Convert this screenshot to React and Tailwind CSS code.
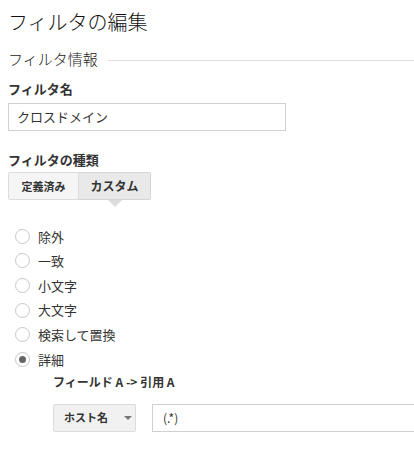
import React from 'react';

const FONT = { fontFamily: '"Noto Sans CJK JP", "Noto Sans", sans-serif' };

const Radio = ({ label, checked }) => (
  <label className="flex items-center h-[24.6px] gap-[8px]">
    <span className="w-[15px] h-[15px] rounded-full border border-[#c8c8c8] bg-white flex items-center justify-center">
      {checked && <span className="w-[7px] h-[7px] rounded-full bg-[#666]" />}
    </span>
    <span className="text-[13px] text-[#333]">{label}</span>
  </label>
);

const App = () => {
  const options = ['除外', '一致', '小文字', '大文字', '検索して置換', '詳細'];
  return (
    <div className="w-[414px] h-[461px] bg-white overflow-hidden text-[#222]" style={FONT}>
      <div className="pl-[8px]">
        <h1 className="text-[20px] leading-[24px] pt-[10px] font-light text-[#111]">フィルタの編集</h1>

        <div className="flex items-center mt-[15px]">
          <h2 className="text-[15px] leading-[20px] font-light text-[#222]">フィルタ情報</h2>
          <div className="flex-1 h-px bg-[#e0e0e0] ml-[10px] mt-[2px]" />
        </div>

        <p className="text-[13px] font-bold leading-[18px] mt-[11px] text-[#333]">フィルタ名</p>
        <div className="mt-[5px] w-[278px] h-[28px] border border-[#d0d0d0] flex items-center pl-[8px]">
          <span className="text-[13px] text-[#333]">クロスドメイン</span>
        </div>

        <p className="text-[13px] font-bold leading-[18px] mt-[20px] text-[#333]">フィルタの種類</p>
        <div className="relative mt-[3px] flex w-fit">
          <button className="h-[28px] w-[71px] border border-[#dcdcdc] bg-[#f5f5f5] text-[11px] font-bold text-[#333] rounded-l-[2px]">
            定義済み
          </button>
          <button className="h-[28px] w-[72px] border border-l-0 border-[#d4d4d4] bg-[#e9e9e9] text-[12px] font-bold text-[#333] rounded-r-[2px]">
            カスタム
          </button>
          <span className="absolute left-[100px] top-[28px] w-0 h-0 border-l-[7px] border-r-[7px] border-t-[7px] border-l-transparent border-r-transparent border-t-[#dcdcdc]" />
        </div>

        <div className="mt-[24px] pl-[7px] flex flex-col">
          {options.map((o, i) => (
            <Radio key={o} label={o} checked={i === options.length - 1} />
          ))}
        </div>

        <p className="ml-[45px] text-[12px] font-bold leading-[16px] mt-[2px] text-[#333]">フィールド A -&gt; 引用 A</p>

        <div className="ml-[45px] mt-[14px] flex gap-[16px]">
          <div className="shrink-0 w-[83px] h-[28px] border border-[#dcdcdc] bg-[#f1f1f1] rounded-[2px] flex items-center pl-[10px]">
            <span className="text-[11px] font-bold text-[#333]">ホスト名</span>
            <span className="ml-[16px] w-0 h-0 border-l-[4px] border-r-[4px] border-t-[4px] border-l-transparent border-r-transparent border-t-[#777]" />
          </div>
          <div className="shrink-0 w-[300px] h-[28px] border border-[#d0d0d0] flex items-center pl-[10px]">
            <span className="text-[12px] text-[#333]">(.*)</span>
          </div>
        </div>
      </div>
    </div>
  );
};

export default App;
